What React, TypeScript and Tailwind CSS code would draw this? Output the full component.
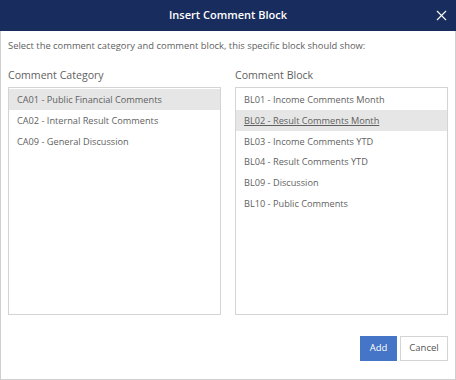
import { X } from "lucide-react";

const categories = [
  "CA01 - Public Financial Comments",
  "CA02 - Internal Result Comments",
  "CA09 - General Discussion",
];

const blocks = [
  "BL01 - Income Comments Month",
  "BL02 - Result Comments Month",
  "BL03 - Income Comments YTD",
  "BL04 - Result Comments YTD",
  "BL09 - Discussion",
  "BL10 - Public Comments",
];

function ListBox({
  title,
  items,
  selected,
  underline,
}: {
  title: string;
  items: string[];
  selected: number;
  underline?: boolean;
}) {
  return (
    <div className="flex flex-col w-[214px]">
      <div className="h-[24px] text-[10.6px] leading-[24px] text-[#5f5f5f]">{title}</div>
      <div className="h-[228px] border border-[#d4d4d4] bg-white pt-[1px]">
        {items.map((item, i) => (
          <div
            key={item}
            className={`h-[20.8px] px-[8px] pt-[1px] text-[9.2px] leading-[20.8px] text-[#5f5f5f] ${
              i === selected ? "bg-[#e6e6e6]" : ""
            } ${i === selected && underline ? "underline" : ""}`}
          >
            {item}
          </div>
        ))}
      </div>
    </div>
  );
}

export default function App() {
  return (
    <div
      className="w-[456px] h-[380px] flex flex-col bg-white"
      style={{ fontFamily: '"Open Sans", "Liberation Sans", sans-serif' }}
    >
      {/* Header */}
      <div className="h-[31px] bg-[#182d5d] flex items-center justify-center relative shrink-0">
        <span className="text-white text-[11px] font-semibold">Insert Comment Block</span>
        <X className="absolute right-[6px] top-[7px] w-[17px] h-[17px] text-white" strokeWidth={1.5} />
      </div>

      {/* Body */}
      <div className="flex-1 border-x border-b border-[#cfcfcf] flex flex-col px-[7px]">
        <p className="mt-[8px] h-[14px] text-[9.4px] leading-[14px] text-[#5f5f5f]">
          Select the comment category and comment block, this specific block should show:
        </p>

        <div className="mt-[10px] flex gap-[14px]">
          <ListBox title="Comment Category" items={categories} selected={0} />
          <ListBox title="Comment Block" items={blocks} selected={1} underline />
        </div>

        <div className="mt-[21px] flex justify-end gap-[3px]">
          <button className="h-[25px] w-[37px] bg-[#4575c6] text-white text-[9.5px]">Add</button>
          <button className="h-[25px] w-[48px] border border-[#d4d4d4] bg-white text-[#555] text-[9.5px]">
            Cancel
          </button>
        </div>
      </div>
    </div>
  );
}
